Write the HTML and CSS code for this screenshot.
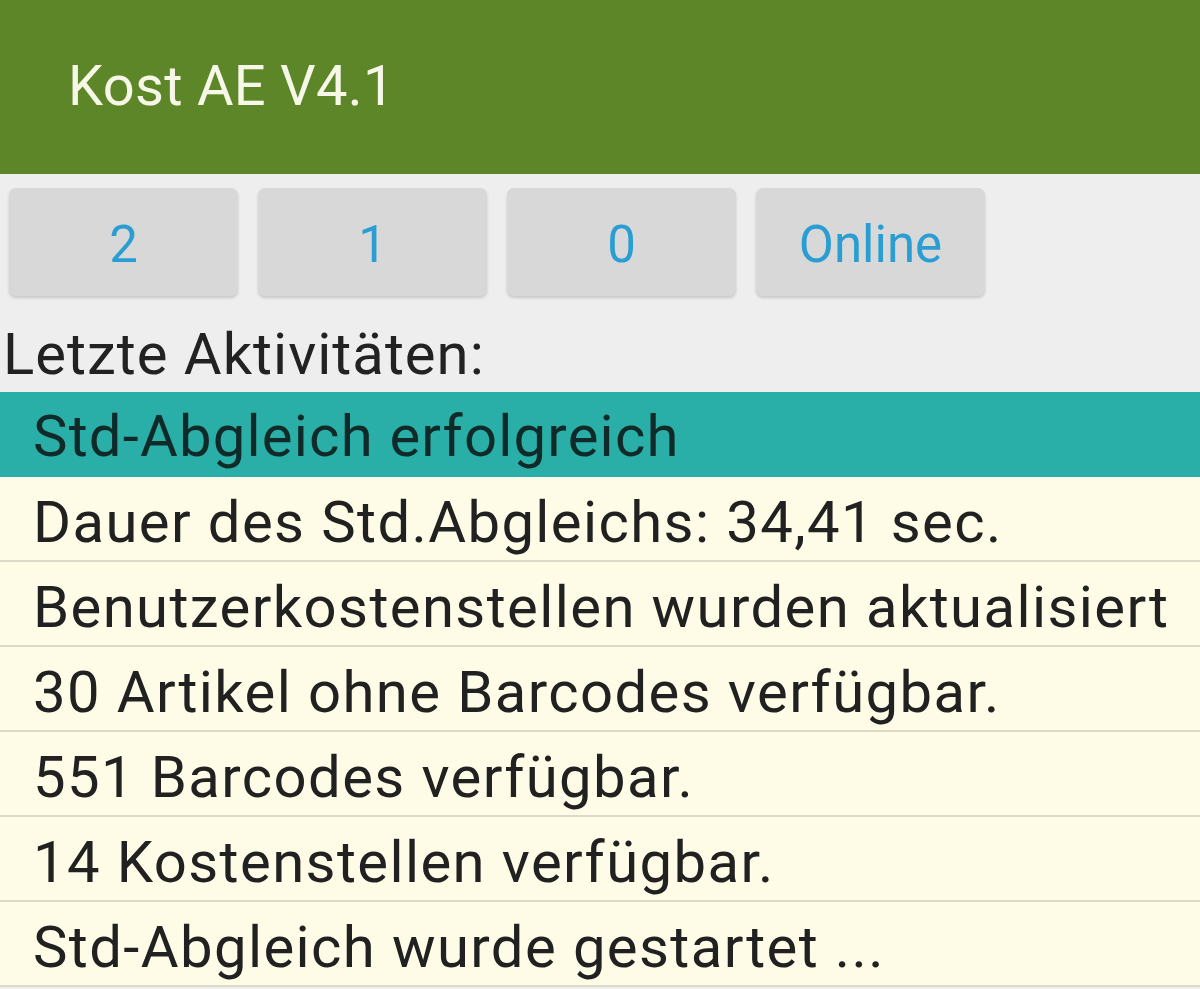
FILE: index.html
```html
<!DOCTYPE html>
<html>
<head>
<meta charset="utf-8">
<link rel="stylesheet" href="styles.css">
</head>
<body>
<header class="appbar"><span class="title">Kost AE V4.1</span></header>
<div class="buttons">
  <div class="btn">2</div>
  <div class="btn">1</div>
  <div class="btn">0</div>
  <div class="btn">Online</div>
</div>
<div class="label">Letzte Aktivitäten:</div>
<ul class="list">
  <li class="item selected">Std-Abgleich erfolgreich</li>
  <li class="item">Dauer des Std.Abgleichs: 34,41 sec.</li>
  <li class="item">Benutzerkostenstellen wurden aktualisiert</li>
  <li class="item">30 Artikel ohne Barcodes verfügbar.</li>
  <li class="item">551 Barcodes verfügbar.</li>
  <li class="item">14 Kostenstellen verfügbar.</li>
  <li class="item">Std-Abgleich wurde gestartet ...</li>
</ul>
</body>
</html>
```
FILE: styles.css
```css
html, body {
  margin: 0;
  padding: 0;
  background: #efeeee;
  font-family: Roboto, "Noto Sans", sans-serif;
  overflow: hidden;
  height: 989px;
}
.appbar {
  height: 174px;
  background: #5d8629;
  padding: 53px 0 0 68px;
  box-sizing: border-box;
}
.title {
  display: block;
  color: #f6f7e6;
  font-size: 56px;
  line-height: 66px;
  letter-spacing: 0.3px;
}
.buttons {
  display: flex;
  gap: 20px;
  padding: 14px 9px 0;
}
.btn {
  width: 229px;
  height: 108px;
  box-sizing: border-box;
  padding-top: 5px;
  background: #d8d8d8;
  border-radius: 7px;
  box-shadow: 0 2px 3px rgba(0,0,0,0.16);
  color: #2a9ed2;
  font-size: 51px;
  display: flex;
  align-items: center;
  justify-content: center;
}
.label {
  font-size: 58px;
  letter-spacing: 1px;
  color: #222;
  padding: 24px 0 0 3px;
  height: 72px;
  line-height: 68px;
  white-space: nowrap;
}
.list {
  list-style: none;
  margin: 0;
  padding: 0;
}
.item {
  height: 83px;
  box-sizing: content-box;
  border-bottom: 2px solid #dbd9c8;
  background: #fefce6;
  color: #212121;
  font-size: 58px;
  letter-spacing: 1.4px;
  padding-left: 33px;
  line-height: 78px;
  padding-top: 0;
  white-space: nowrap;
  overflow: hidden;
}
.item:not(.selected) {
  height: 77px;
  padding-top: 6px;
}
.item.selected {
  background: #2aafa8;
  border-bottom: none;
  height: 80px;
  padding-top: 5px;
  letter-spacing: 1.2px;
  color: #0f2a28;
}
```
